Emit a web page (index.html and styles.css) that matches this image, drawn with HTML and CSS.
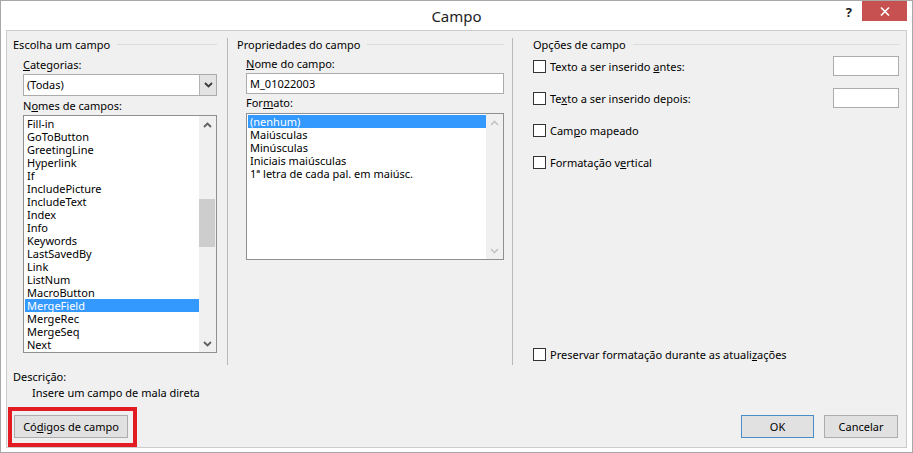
FILE: index.html
```html
<!DOCTYPE html>
<html lang="pt-BR">
<head>
<meta charset="utf-8">
<title>Campo</title>
<link rel="stylesheet" href="styles.css">
</head>
<body>
<div class="window">
  <div class="titlebar">
    <div class="tb-side"></div>
    <div class="tb-title">Campo</div>
    <div class="tb-controls">
      <span class="help">?</span>
      <span class="close"><svg width="10" height="9" viewBox="0 0 10 9"><path d="M1 0.5 L9 8.5 M9 0.5 L1 8.5" stroke="#fff" stroke-width="1.6" fill="none"/></svg></span>
    </div>
  </div>

  <div class="panel">
    <div class="columns">
      <section class="col col1">
        <div class="group-title"><span>Escolha um campo</span><i class="rule"></i></div>
        <div class="label l-cat"><u>C</u>ategorias:</div>
        <div class="combo">
          <span class="combo-text">(Todas)</span>
          <span class="combo-btn"><svg width="9" height="6" viewBox="0 0 9 6"><path d="M1 1 L4.5 4.5 L8 1" stroke="#3a3a3a" stroke-width="1.8" fill="none"/></svg></span>
        </div>
        <div class="label l-names">N<u>o</u>mes de campos:</div>
        <div class="listbox names">
          <ul class="items">
            <li>Fill-in</li>
            <li>GoToButton</li>
            <li>GreetingLine</li>
            <li>Hyperlink</li>
            <li>If</li>
            <li>IncludePicture</li>
            <li>IncludeText</li>
            <li>Index</li>
            <li>Info</li>
            <li>Keywords</li>
            <li>LastSavedBy</li>
            <li>Link</li>
            <li>ListNum</li>
            <li>MacroButton</li>
            <li class="sel">MergeField</li>
            <li>MergeRec</li>
            <li>MergeSeq</li>
            <li>Next</li>
          </ul>
          <div class="vscroll">
            <span class="arrow"><svg width="9" height="6" viewBox="0 0 9 6"><path d="M1 5 L4.5 1.5 L8 5" stroke="#606060" stroke-width="1.8" fill="none"/></svg></span>
            <span class="track"><span class="thumb"></span></span>
            <span class="arrow"><svg width="9" height="6" viewBox="0 0 9 6"><path d="M1 1 L4.5 4.5 L8 1" stroke="#606060" stroke-width="1.8" fill="none"/></svg></span>
          </div>
        </div>
      </section>

      <div class="vsep sep-a"></div>

      <section class="col col2">
        <div class="group-title"><span>Propriedades do campo</span><i class="rule"></i></div>
        <div class="label l-name"><u>N</u>ome do campo:</div>
        <div class="textbox">M_01022003</div>
        <div class="label l-fmt">For<u>m</u>ato:</div>
        <div class="listbox formats">
          <ul class="items">
            <li class="sel">(nenhum)</li>
            <li>Maiúsculas</li>
            <li>Minúsculas</li>
            <li>Iniciais maiúsculas</li>
            <li>1ª letra de cada pal. em maiúsc.</li>
          </ul>
          <div class="vscroll disabled">
            <span class="arrow"><svg width="9" height="6" viewBox="0 0 9 6"><path d="M1 5 L4.5 1.5 L8 5" stroke="#c4c4c4" stroke-width="1.6" fill="none"/></svg></span>
            <span class="track"></span>
            <span class="arrow"><svg width="9" height="6" viewBox="0 0 9 6"><path d="M1 1 L4.5 4.5 L8 1" stroke="#c4c4c4" stroke-width="1.6" fill="none"/></svg></span>
          </div>
        </div>
      </section>

      <div class="vsep sep-b"></div>

      <section class="col col3">
        <div class="group-title"><span>Opções de campo</span><i class="rule"></i></div>
        <div class="opt first">
          <span class="check"></span><span>Texto a ser inserido <u>a</u>ntes:</span>
          <span class="opt-input"></span>
        </div>
        <div class="opt">
          <span class="check"></span><span>Te<u>x</u>to a ser inserido depois:</span>
          <span class="opt-input"></span>
        </div>
        <div class="opt">
          <span class="check"></span><span>Cam<u>p</u>o mapeado</span>
        </div>
        <div class="opt">
          <span class="check"></span><span>Formatação v<u>e</u>rtical</span>
        </div>
        <div class="opt last">
          <span class="check"></span><span>Preservar formatação durante as atuali<u>z</u>ações</span>
        </div>
      </section>
    </div>

    <div class="desc">
      <div class="desc-label">Descrição:</div>
      <div class="desc-text">Insere um campo de mala direta</div>
    </div>

    <div class="footer">
      <div class="highlight">
        <button class="btn btn-codes" type="button">Có<u>d</u>igos de campo</button>
      </div>
      <button class="btn btn-ok" type="button">OK</button>
      <button class="btn btn-cancel" type="button">Cancelar</button>
    </div>
  </div>
</div>
</body>
</html>
```

FILE: styles.css
```css
* { box-sizing: border-box; }

body {
  margin: 0;
  background: #ffffff;
  font-family: "Noto Sans", "Open Sans", sans-serif;
  font-size: 11px;
  color: #000;
}

u { text-decoration: underline; text-underline-offset: 1px; }

.window {
  width: 913px;
  height: 453px;
  border: 1px solid #a8a8a8;
  background: #ffffff;
  display: flex;
  flex-direction: column;
}

/* title bar */
.titlebar {
  height: 29px;
  flex: none;
  display: grid;
  grid-template-columns: 1fr auto 1fr;
  align-items: start;
}
.tb-title {
  font-size: 15px;
  line-height: 30px;
  color: #1e1e1e;
}
.tb-controls {
  justify-self: end;
  display: flex;
  align-items: flex-start;
  margin-right: 5px;
}
.help {
  font-size: 13px;
  font-weight: bold;
  line-height: 22px;
  color: #202020;
  margin-right: 10px;
}
.close {
  width: 45px;
  height: 20px;
  background: #c75050;
  display: flex;
  align-items: center;
  justify-content: center;
}

/* main panel */
.panel {
  margin: 0 5px 4px 5px;
  height: 418px;
  border: 1px solid #cccccc;
  background: #f0f0f0;
  padding: 7px 6px 0 6px;
  display: flex;
  flex-direction: column;
}

.columns {
  display: flex;
  height: 327px;
  flex: none;
}
.col { display: flex; flex-direction: column; }
.col1 { width: 204px; }
.col2 { width: 267px; }
.col3 { width: 375px; }

.vsep { width: 1px; background: #b9b9b9; flex: none; }
.sep-a { margin: 0 9px 0 10px; }
.sep-b { margin: 0 12px 0 8px; }

.group-title {
  display: flex;
  align-items: center;
  height: 14px;
  line-height: 14px;
  white-space: nowrap;
}
.rule {
  flex: 1;
  height: 1px;
  background: #dcdcdc;
  margin-left: 7px;
  margin-top: -1px;
}

.label { line-height: 14px; height: 14px; white-space: nowrap; }
.col1 .label, .col1 .combo, .col1 .listbox { margin-left: 10px; }
.col2 .label, .col2 .textbox, .col2 .listbox { margin-left: 9px; }

.l-cat { margin-top: 6px; }
.combo { margin-top: 2px; }
.l-names { margin-top: 3px; }
.names { margin-top: 2px; }

.l-name { margin-top: 5px; }
.textbox { margin-top: 2px; }
.l-fmt { margin-top: 2px; }
.formats { margin-top: 3px; }

/* combo box */
.combo {
  width: 194px;
  height: 22px;
  border: 1px solid #acacac;
  background: #ffffff;
  display: flex;
}
.combo-text {
  flex: 1;
  padding-left: 3px;
  line-height: 20px;
}
.combo-btn {
  width: 17px;
  background: #e3e3e3;
  border-left: 1px solid #b4b4b4;
  display: flex;
  align-items: center;
  justify-content: center;
}

/* text box */
.textbox {
  width: 258px;
  height: 21px;
  border: 1px solid #acacac;
  background: #ffffff;
  line-height: 19px;
  padding-left: 3px;
}

/* list boxes */
.listbox {
  border: 1px solid #8e8f8f;
  background: #ffffff;
  display: flex;
}
.names { width: 194px; height: 238px; }
.formats { width: 258px; height: 147px; }

.items {
  flex: 1;
  list-style: none;
  margin: 0;
  padding: 1px 0 0 1px;
  overflow: hidden;
}
.items li {
  height: 13px;
  line-height: 13px;
  padding-left: 2px;
  white-space: nowrap;
}
.items li.sel {
  background: #3399ff;
  color: #ffffff;
}

.vscroll {
  width: 17px;
  flex: none;
  background: #f0f0f0;
  display: flex;
  flex-direction: column;
}
.vscroll .arrow {
  height: 17px;
  display: flex;
  align-items: center;
  justify-content: center;
  flex: none;
}
.vscroll .track { flex: 1; }
.thumb {
  display: block;
  margin: 66px 1px 0 0;
  height: 48px;
  background: #cdcdcd;
}

/* options column */
.col3 { padding-left: 8px; }
.opt {
  display: flex;
  align-items: center;
  height: 20px;
  margin-top: 12px;
  white-space: nowrap;
}
.opt.first { margin-top: 4px; }
.opt.last { margin-top: auto; margin-bottom: 1px; }
.check {
  width: 13px;
  height: 13px;
  border: 1px solid #333333;
  background: #ffffff;
  margin-right: 4px;
  flex: none;
}
.opt-input {
  margin-left: auto;
  margin-right: 1px;
  width: 66px;
  height: 20px;
  border: 1px solid #acacac;
  background: #ffffff;
}

/* description */
.desc {
  margin-top: 4px;
  line-height: 16px;
}
.desc-text { padding-left: 19px; }

/* footer */
.footer {
  display: flex;
  align-items: flex-start;
  margin-top: 6px;
  padding-right: 2px;
}
.highlight {
  margin-left: -5px;
  border: 4px solid #e31b23;
  padding: 4px 5px 5px 2px;
}
.btn {
  height: 23px;
  border: 1px solid #adadad;
  background: #e1e1e1;
  font-family: inherit;
  font-size: 11px;
  color: #000;
  padding: 0;
  line-height: 21px;
  text-align: center;
}
.btn-codes { width: 114px; display: block; }
.btn-ok {
  margin-left: auto;
  margin-top: 8px;
  width: 73px;
  border-color: #4a8cc8;
}
.btn-cancel {
  margin-left: 10px;
  margin-top: 8px;
  width: 74px;
}
```
